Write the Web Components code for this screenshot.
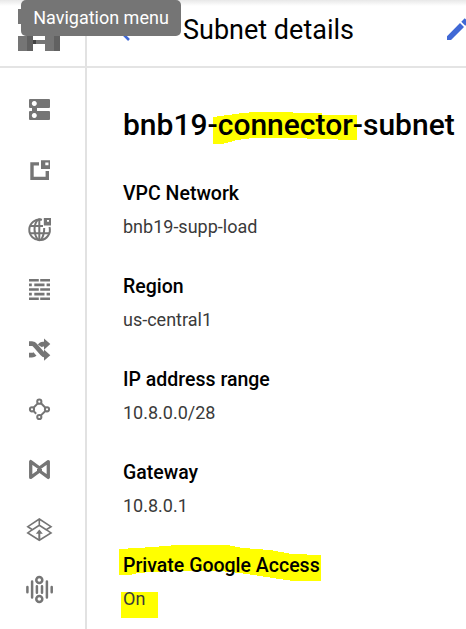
<!DOCTYPE html>
<html lang="en"><head><meta charset="utf-8"><title>Subnet details</title>
<style>body{margin:0;background:#fff;overflow:hidden;font-family:Roboto,"Liberation Sans",sans-serif}</style></head>
<body><subnet-page></subnet-page>
<script>
const define = (name, html) => customElements.define(name, class extends HTMLElement {
  constructor() {
    super();
    this.attachShadow({mode: 'open'}).innerHTML = html;
  }
});

// Icons drawn in a 30x30 box
const icons = {
  networks: '<path fill-rule="evenodd" d="M5 4h19q1 0 1 1v7q0 1-1 1H12v3h12q1 0 1 1v7q0 1-1 1H5q-1 0-1-1v-7q0-1 1-1h2v-3H5q-1 0-1-1V5q0-1 1-1zM9.3 6a2.5 2.5 0 1 0 .01 0zM9.3 18a2.5 2.5 0 1 0 .01 0z"/>',
  addresses: '<path d="M14 7.3H5.3V25H24v-9h-3.4v5.7H8.7V10.6H14z"/><path fill-rule="evenodd" d="M16 5.3h9V14h-9zM20.3 7.4v2.8h3.2V7.4z"/>',
  globe: '<g class="s" stroke-width="2"><path d="M17 4.8A10.3 10.3 0 1 0 24.5 12"/><path d="M16 5Q14.5 3.7 12.5 5.2C8.5 10 8.5 19 12.7 24.5Q14.5 26 16.2 24.5C18.5 21 19.3 18 19.2 13M5 11h13M5 18.3h19M14.3 4v21"/></g><path fill-rule="evenodd" d="M18.8 3h7.2v7.5h-7.2zM22 5v1.8h2V5z"/>',
  firewall: '<path d="M4 4h9.8v2.6H4zM15.2 4H25v2.6h-9.8zM4 8.6h2.8v2.6H4zM9.3 8.6h10.2v2.6H9.3zM21.6 8.6H25v2.6h-3.4zM4 13.2h9.8v2.6H4zM15.2 13.2H25v2.6h-9.8zM4 17.8h2.8v2.6H4zM9.3 17.8h10.2v2.6H9.3zM21.6 17.8H25v2.6h-3.4zM4 22.4h9.8V25H4zM15.2 22.4H25V25h-9.8z"/>',
  routes: '<path class="s" stroke-width="4.8" d="M4 8.7h3q2 0 3.5 2l6.5 7.5q1.5 2 4 2M4 20.2h3q1.5 0 3-1.2M15 11q1-1.8 3-1.8h3"/><path d="M19 3.6l6.3 5.4-6.3 5.8zM19 14.6l6.3 5.6-6.3 5.6z"/>',
  peering: '<g class="s" stroke-width="2"><circle cx="14.3" cy="6.7" r="2.1"/><circle cx="7" cy="14.3" r="2.1"/><circle cx="22" cy="14.3" r="2.1"/><circle cx="14.3" cy="22" r="2.1"/><path d="M8.5 12.7l4.3-4.3M16 8.3l4.4 4.4M20.4 16l-4.5 4.4M8.5 16l2.7 2.7"/></g>',
  shared: '<path class="s" stroke-width="3.3" stroke-linejoin="round" d="M5.7 6.6v15.8L14.5 16l8.8 6.4V6.6L14.5 13zM12 14.5h5"/>',
  access: '<g class="s" stroke-width="1.6"><path d="M14.3 4L26 11.7l-4.8 3-6.9-4.4-6.9 4.4-4.6-3zM7.4 14.7l-4.6 3.2 11.5 7.3L26 17.9l-4.8-3.2M14.3 4v6.5"/><path d="M14.3 25v-9" stroke-width="2"/></g><path d="M10.8 18.7l3.5-4.2 3.5 4.2z"/>',
  mirroring: '<g class="s" stroke-width="2.5"><circle cx="14.3" cy="5" r="3"/><circle cx="14.3" cy="24" r="3"/><path stroke-linecap="round" d="M2.4 12v5.3M7.1 6.5v16M11.9 11.2v6.6M17 11.2v6.6M21.9 6.5v16M26.7 12v5.3"/></g>'
};
customElements.define('nav-icon', class extends HTMLElement {
  connectedCallback() {
    this.attachShadow({mode: 'open'}).innerHTML = `<style>
      :host{display:flex;align-items:center;height:60px;padding-left:25px;box-sizing:border-box}
      svg{width:30px;height:30px;fill:#757575;overflow:visible}.s{fill:none;stroke:#757575}</style>
      <svg viewBox="0 0 30 30">${icons[this.getAttribute('name')]}</svg>`;
  }
});
define('side-nav', `<style>:host{display:flex;flex-direction:column;padding-top:12px;border-right:2px solid #e2e2e2;box-sizing:border-box}</style>
  ${Object.keys(icons).map(n => `<nav-icon name="${n}"></nav-icon>`).join('')}`);
define('product-logo', `<style>:host{display:block;border-right:2px solid #e2e2e2;box-sizing:border-box;padding:9px 0 0 18px}svg{display:block}</style>
  <svg width="42" height="42" shape-rendering="crispEdges"><path fill="#757575" d="M0 0h15v15H0zM27 0h15v15H27zM0 27h15v15H0zM27 27h15v15H27z"/><path fill="#616161" d="M9 0h6v15H9zM36 0h6v15h-6zM9 27h6v15H9zM36 27h6v15h-6z"/><path fill="#757575" d="M15 31h12v4H15z"/><path fill="#424242" d="M15 31h3v4h-3z"/></svg>`);
define('page-header', `<style>
  :host{display:flex;align-items:center;padding:0 0 7px 30px;box-sizing:border-box}
  .back{flex:none;width:14px;margin:2px 52px 0 0}
  span{font-size:27px;line-height:32px;flex:none}
  .edit{flex:none;margin-left:auto;margin-right:-4px}</style>
  <svg class="back" width="14" height="22" viewBox="0 0 14 22" fill="none" stroke="#4068d5" stroke-width="2.6"><path d="M12 2L3 11l9 9"/></svg>
  <span><slot></slot></span>
  <svg class="edit" width="23" height="23" viewBox="0 0 23 23" fill="#4068d5"><path d="M0 18.2V22h4L17 9l-4-4zM14.3 3.7l4 4 3.4-3.4-4-4z"/></svg>`);
define('nav-tooltip', `<style>:host{position:absolute;left:21px;top:0;width:160px;height:36px;border-radius:5px;background:#757575;color:#fff;font-size:18px;line-height:36px;text-align:center}</style><slot></slot>`);
// Text with a hand-drawn marker shape behind it
customElements.define('marker-text', class extends HTMLElement {
  connectedCallback() {
    this.attachShadow({mode: 'open'}).innerHTML = `<style>:host{position:relative;display:inline-block;z-index:0}
      svg{position:absolute;left:0;top:0;width:1px;height:1px;overflow:visible;z-index:-1}</style>
      <svg><polygon fill="#ff0" shape-rendering="crispEdges" points="${this.getAttribute('shape')}"/></svg><slot></slot>`;
  }
});
define('detail-field', `<style>:host{display:flex;flex-direction:column;gap:9px;height:93px;line-height:24px;white-space:nowrap}
  .l{font-size:19.5px;font-weight:500;color:#000}.v{font-size:18px;color:#3a3a3a}</style>
  <div class="l"><slot name="label"></slot></div><div class="v"><slot></slot></div>`);
define('subnet-page', `<style>
  :host{display:grid;grid-template-columns:87px 1fr;grid-template-rows:68px 1fr;width:466px;height:629px;position:relative;overflow:hidden;color:#000;background:linear-gradient(#e8e8e8,#fff 6px)}
  product-logo,page-header{border-bottom:2px solid #e4e4e4}
  main{padding:38px 0 0 36px}
  h1{margin:0 0 38px;font-size:30px;line-height:38px;font-weight:500;white-space:nowrap}
  </style>
  <product-logo></product-logo><page-header>Subnet details</page-header>
  <side-nav></side-nav>
  <main><h1><marker-text shape="90,11 105,9 119,7 134,6 170,6 170,7 199,7 199,9 234,9 234,34 215,34 215,33 184,33 184,32 130,32 114,34 107,36 99,38 90,38">bnb19-connector-subnet</marker-text></h1>
  <detail-field><span slot="label">VPC Network</span>bnb19-supp-load</detail-field>
  <detail-field><span slot="label">Region</span>us-central1</detail-field>
  <detail-field><span slot="label">IP address range</span>10.8.0.0/28</detail-field>
  <detail-field><span slot="label">Gateway</span>10.8.0.1</detail-field>
  <detail-field><marker-text slot="label" shape="-4,-5 30,-7 54,-9 104,-9 120,-6 147,-4 169,0 198,1 198,27 170,27 137,22 117,19 97,17 44,17 15,19 7,21 -4,21">Private Google Access</marker-text><marker-text shape="-2,5 35,5 35,31 -2,31">On</marker-text></detail-field>
  </main><nav-tooltip>Navigation menu</nav-tooltip>`);
</script></body></html>
